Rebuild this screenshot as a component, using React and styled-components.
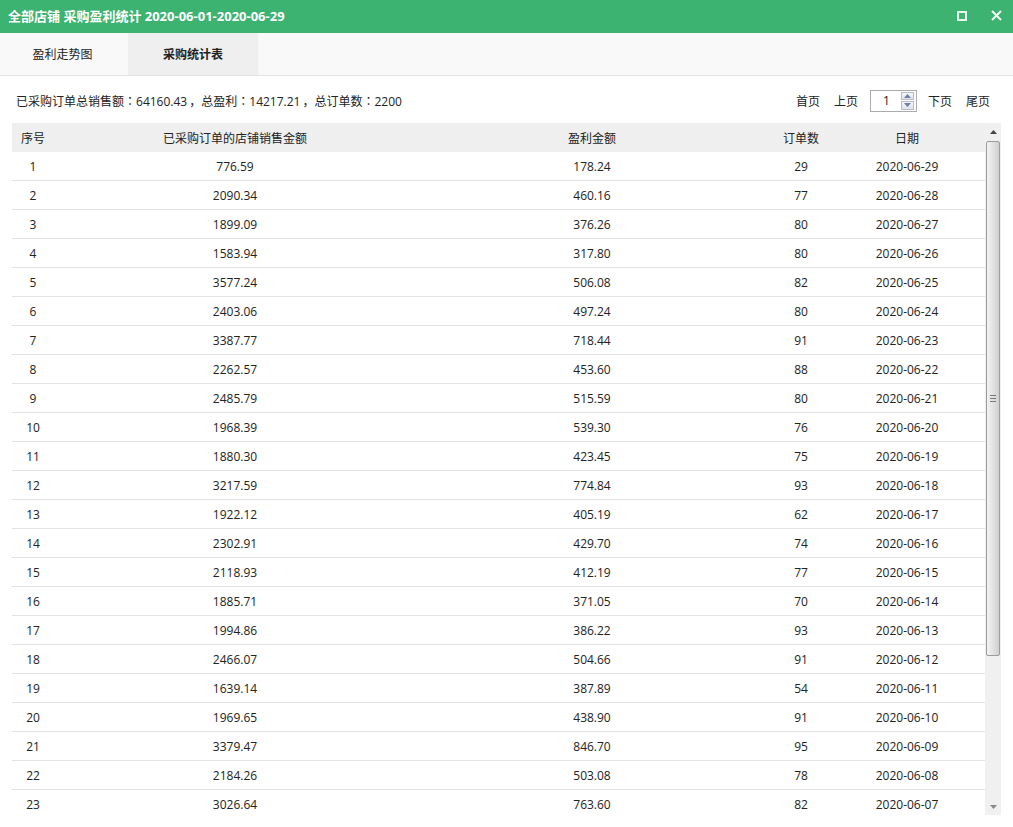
import React from 'react';
import styled, { createGlobalStyle } from 'styled-components';

// 表格数据
const rows = [
    [776.59, 178.24, 29, '2020-06-29'],
    [2090.34, 460.16, 77, '2020-06-28'],
    [1899.09, 376.26, 80, '2020-06-27'],
    [1583.94, 317.80, 80, '2020-06-26'],
    [3577.24, 506.08, 82, '2020-06-25'],
    [2403.06, 497.24, 80, '2020-06-24'],
    [3387.77, 718.44, 91, '2020-06-23'],
    [2262.57, 453.60, 88, '2020-06-22'],
    [2485.79, 515.59, 80, '2020-06-21'],
    [1968.39, 539.30, 76, '2020-06-20'],
    [1880.30, 423.45, 75, '2020-06-19'],
    [3217.59, 774.84, 93, '2020-06-18'],
    [1922.12, 405.19, 62, '2020-06-17'],
    [2302.91, 429.70, 74, '2020-06-16'],
    [2118.93, 412.19, 77, '2020-06-15'],
    [1885.71, 371.05, 70, '2020-06-14'],
    [1994.86, 386.22, 93, '2020-06-13'],
    [2466.07, 504.66, 91, '2020-06-12'],
    [1639.14, 387.89, 54, '2020-06-11'],
    [1969.65, 438.90, 91, '2020-06-10'],
    [3379.47, 846.70, 95, '2020-06-09'],
    [2184.26, 503.08, 78, '2020-06-08'],
    [3026.64, 763.60, 82, '2020-06-07'],
];

const App = () => {
    return (
        <>
            <GlobalStyle />
            <Window>
                <TitleBar>
                    <Title>全部店铺 采购盈利统计 2020-06-01-2020-06-29</Title>
                    <TitleButtons>
                        <svg width="10" height="10" viewBox="0 0 10 10">
                            <rect x="1" y="1" width="8" height="8" fill="none" stroke="#e8f6ee" strokeWidth="2" />
                        </svg>
                        <svg width="11" height="11" viewBox="0 0 11 11">
                            <path d="M1 1 L10 10 M10 1 L1 10" stroke="#f2fbf6" strokeWidth="2" />
                        </svg>
                    </TitleButtons>
                </TitleBar>

                <Tabs>
                    <Tab>盈利走势图</Tab>
                    <Tab $active>采购统计表</Tab>
                </Tabs>

                <Toolbar>
                    <Summary>
                        已采购订单总销售额<Colon>：</Colon>64160.43<Comma>，</Comma>总盈利<Colon>：</Colon>14217.21<Comma>，</Comma>总订单数<Colon>：</Colon>2200
                    </Summary>
                    <Pager>
                        <PageLink>首页</PageLink>
                        <PageLink $gap={14}>上页</PageLink>
                        <Spinner>
                            <SpinValue>1</SpinValue>
                            <SpinButtons>
                                <SpinBtn>
                                    <svg width="7" height="4" viewBox="0 0 7 4"><path d="M0 4 L3.5 0 L7 4 Z" fill="#6d7fa8" /></svg>
                                </SpinBtn>
                                <SpinBtn>
                                    <svg width="7" height="4" viewBox="0 0 7 4"><path d="M0 0 L7 0 L3.5 4 Z" fill="#6d7fa8" /></svg>
                                </SpinBtn>
                            </SpinButtons>
                        </Spinner>
                        <PageLink $gap={11}>下页</PageLink>
                        <PageLink $gap={14}>尾页</PageLink>
                    </Pager>
                </Toolbar>

                <TableArea>
                    <Viewport>
                        <HeadRow>
                            <Cell>序号</Cell>
                            <Cell>已采购订单的店铺销售金额</Cell>
                            <Cell>盈利金额</Cell>
                            <Cell>订单数</Cell>
                            <Cell>日期</Cell>
                        </HeadRow>
                        {rows.map((r, i) => (
                            <Row key={i}>
                                <Cell>{i + 1}</Cell>
                                <Cell>{r[0].toFixed(2)}</Cell>
                                <Cell>{r[1].toFixed(2)}</Cell>
                                <Cell>{r[2]}</Cell>
                                <Cell>{r[3]}</Cell>
                            </Row>
                        ))}
                    </Viewport>
                    <ScrollBar>
                        <Arrow>
                            <svg width="7" height="4" viewBox="0 0 7 4"><path d="M0 4 L3.5 0 L7 4 Z" fill="#444" /></svg>
                        </Arrow>
                        <Track>
                            <Thumb>
                                <Grip />
                            </Thumb>
                        </Track>
                        <Arrow>
                            <svg width="7" height="4" viewBox="0 0 7 4"><path d="M0 0 L7 0 L3.5 4 Z" fill="#888" /></svg>
                        </Arrow>
                    </ScrollBar>
                </TableArea>
            </Window>
        </>
    );
};

export default App;

const GlobalStyle = createGlobalStyle`
    body {
        margin: 0;
        padding: 0;
        background: #fff;
        font-family: "Open Sans", "Noto Sans CJK SC", sans-serif;
        font-size: 12px;
        color: #222;
    }
`;

const Window = styled.div`
    width: 1013px;
    height: 827px;
    display: flex;
    flex-direction: column;
    background: #fff;
    overflow: hidden;
`;

const TitleBar = styled.div`
    height: 33px;
    flex-shrink: 0;
    background: #3cb371;
    display: flex;
    align-items: center;
    justify-content: space-between;
    padding: 0 11px 0 8px;
`;

const Title = styled.div`
    color: #fff;
    font-size: 13px;
    font-weight: 700;
    margin-top: -3px;
`;

const TitleButtons = styled.div`
    display: flex;
    align-items: center;
    gap: 24px;
    margin-top: -2px;
`;

const Tabs = styled.div`
    height: 42px;
    flex-shrink: 0;
    display: flex;
    background: #f9f9f9;
    border-bottom: 1px solid #e3e3e3;
`;

const Tab = styled.div`
    width: ${p => (p.$active ? '130px' : '128px')};
    display: flex;
    align-items: center;
    justify-content: center;
    padding-right: ${p => (p.$active ? '0' : '3px')};
    box-sizing: border-box;
    background: ${p => (p.$active ? '#efefef' : 'transparent')};
    font-weight: ${p => (p.$active ? 700 : 400)};
    color: #222;
    cursor: pointer;
`;

const Toolbar = styled.div`
    height: 47px;
    flex-shrink: 0;
    display: flex;
    align-items: center;
    justify-content: space-between;
    padding: 2px 23px 0 16px;
    box-sizing: border-box;
`;

const Summary = styled.div`
    color: #222;
`;

// 全角冒号居中显示
const Colon = styled.span`
    font-family: "Noto Sans CJK TC", sans-serif;
`;

// 全角逗号前留一点空
const Comma = styled.span`
    padding-left: 2px;
`;

const Pager = styled.div`
    display: flex;
    align-items: center;
`;

const PageLink = styled.span`
    cursor: pointer;
    margin-left: ${p => (p.$gap ? `${p.$gap}px` : '0')};
`;

const Spinner = styled.div`
    width: 47px;
    height: 22px;
    margin-left: 12px;
    box-sizing: border-box;
    border: 1px solid #ababab;
    display: flex;
    align-items: center;
    justify-content: space-between;
    padding: 1px 2px 1px 12px;
    background: #fff;
`;

const SpinValue = styled.span`
    font-size: 12px;
`;

const SpinButtons = styled.div`
    display: flex;
    flex-direction: column;
    gap: 1px;
    height: 100%;
`;

const SpinBtn = styled.div`
    width: 13px;
    flex: 1;
    box-sizing: border-box;
    border: 1px solid #b8bcc8;
    background: linear-gradient(#f4f6fa, #dfe3ec);
    display: flex;
    align-items: center;
    justify-content: center;
`;

const TableArea = styled.div`
    height: 692px;
    flex-shrink: 0;
    margin: 0 12px;
    display: flex;
`;

const Viewport = styled.div`
    flex: 1;
    overflow: hidden;
`;

const HeadRow = styled.div`
    display: grid;
    grid-template-columns: 42px 362px 352px 66px 146px 1fr;
    height: 29px;
    align-items: center;
    background: #efefef;
`;

const Row = styled(HeadRow)`
    background: #fff;
    box-sizing: border-box;
    border-bottom: 1px solid #e3e3e3;
`;

const Cell = styled.div`
    text-align: center;
    white-space: nowrap;
    color: #222;
`;

const ScrollBar = styled.div`
    width: 16px;
    display: flex;
    flex-direction: column;
    background: #f0f0f0;
`;

const Arrow = styled.div`
    height: 17px;
    flex-shrink: 0;
    display: flex;
    align-items: center;
    justify-content: center;
`;

const Track = styled.div`
    flex: 1;
    padding: 1px 1px 0 1px;
`;

const Thumb = styled.div`
    height: 515px;
    box-sizing: border-box;
    border: 1px solid #9c9c9c;
    border-radius: 2px;
    background: linear-gradient(90deg, #f3f3f3, #e2e2e2 50%, #cfcfcf);
    display: flex;
    align-items: center;
    justify-content: center;
`;

const Grip = styled.div`
    width: 6px;
    height: 5px;
    border-top: 1px solid #777;
    border-bottom: 1px solid #777;
    position: relative;
    &::after {
        content: '';
        position: absolute;
        left: 0;
        right: 0;
        top: 2px;
        border-top: 1px solid #777;
    }
`;
